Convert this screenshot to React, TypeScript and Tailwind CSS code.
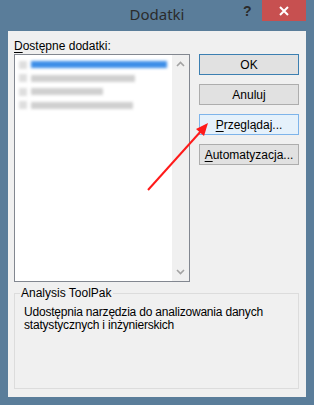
import React from "react";

const font = { fontFamily: '"Liberation Sans", Arial, sans-serif' };

function Btn({ children, variant }: { children: React.ReactNode; variant?: "default" | "hover" }) {
  const cls =
    variant === "default"
      ? "border-[#3c7fb1] bg-[#e1e1e1]"
      : variant === "hover"
      ? "border-[#7eb4ea] bg-[#e5f1fb]"
      : "border-[#adadad] bg-[#e1e1e1]";
  return (
    <div className={`h-[21px] w-[100px] border ${cls} flex items-center justify-center text-[12px] leading-none text-black`}>
      {children}
    </div>
  );
}

function Row({ w, selected }: { w: number; selected?: boolean }) {
  return (
    <div className="flex h-[13.5px] items-center gap-[4px] pl-[4px]">
      <div className="h-[8px] w-[8px] bg-[#dedede] blur-[1.5px]" />
      <div
        className={`h-[7px] blur-[1.5px] ${selected ? "bg-[#3d8ee8]" : "bg-[#d0d0d0]"}`}
        style={{ width: w }}
      />
    </div>
  );
}

export default function App() {
  return (
    <div className="relative h-[405px] w-[314px] bg-[#5a7d9a] flex flex-col" style={font}>
      <div className="relative h-[31px] flex items-center justify-center">
        <span className="text-[15px] text-[#2b2b2b] leading-none -mt-[2px]" style={{ fontFamily: '"Noto Sans", sans-serif' }}>Dodatki</span>
        <span className="absolute left-[243px] top-[4px] text-[14px] font-bold text-[#2b2b2b] leading-none">?</span>
        <div className="absolute left-[262px] top-0 h-[21px] w-[44px] bg-[#c75050] flex items-center justify-center">
          <svg width="10" height="10" viewBox="0 0 10 10">
            <path d="M1 1 L9 9 M9 1 L1 9" stroke="white" strokeWidth="2" />
          </svg>
        </div>
      </div>
      <div className="mx-[8px] h-[366px] bg-[#f0f0f0] px-[6px] pt-[9px] flex flex-col text-black">
        <div className="text-[12px] leading-none h-[14px]">
          <span className="underline underline-offset-[2px]">D</span>ostępne dodatki:
        </div>
        <div className="flex">
          <div className="h-[228px] w-[176px] border border-[#828790] bg-white flex">
            <div className="flex-1 pt-[3px] overflow-hidden">
              <Row w={136} selected />
              <Row w={104} />
              <Row w={72} />
              <Row w={102} />
            </div>
            <div className="w-[17px] bg-[#f0f0f0] flex flex-col justify-between items-center py-[6px]">
              <svg width="9" height="6" viewBox="0 0 9 6"><path d="M1 5 L4.5 1.5 L8 5" stroke="#a3a3a3" strokeWidth="1.6" fill="none" /></svg>
              <svg width="9" height="6" viewBox="0 0 9 6"><path d="M1 1 L4.5 4.5 L8 1" stroke="#a3a3a3" strokeWidth="1.6" fill="none" /></svg>
            </div>
          </div>
          <div className="ml-[9px] flex flex-col gap-[9px]">
            <Btn variant="default">OK</Btn>
            <Btn>Anuluj</Btn>
            <Btn variant="hover"><span><span className="underline underline-offset-[2px]">P</span>rzeglądaj...</span></Btn>
            <Btn><span><span className="underline underline-offset-[2px]">A</span>utomatyzacja...</span></Btn>
          </div>
        </div>
        <div className="relative mt-[11px] h-[96px] w-[285px] border border-[#dcdcdc]">
          <span className="absolute left-[5px] -top-[7px] bg-[#f0f0f0] px-[1px] text-[12px] leading-none">Analysis ToolPak</span>
          <div className="pl-[9px] pt-[12px] text-[12px] leading-[13px] tracking-[-0.2px]">
            <div>Udostępnia narzędzia do analizowania danych</div>
            <div>statystycznych i inżynierskich</div>
          </div>
        </div>
      </div>
      <svg className="absolute left-0 top-0" width="314" height="405" viewBox="0 0 314 405">
        <line x1="148" y1="190" x2="202" y2="130" stroke="#ff1a1a" strokeWidth="2" />
        <polygon points="208,123 196,129 204,136" fill="#ff1a1a" />
      </svg>
    </div>
  );
}
